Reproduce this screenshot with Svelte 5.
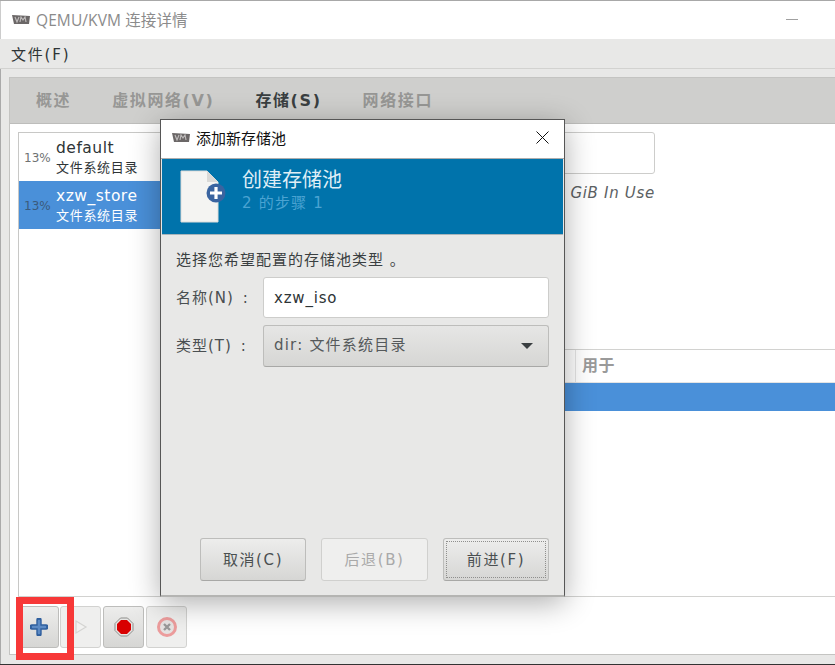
<script lang="ts">
	const tabs = [
		{ label: '概述', active: false },
		{ label: '虚拟网络(V)', active: false },
		{ label: '存储(S)', active: true },
		{ label: '网络接口', active: false },
	];
	const pools = [
		{ pct: '13%', name: 'default', kind: '文件系统目录', selected: false },
		{ pct: '13%', name: 'xzw_store', kind: '文件系统目录', selected: true },
	];
</script>

{#snippet vmIcon()}
	<svg class="vm" width="20" height="11" viewBox="0 0 20 11">
		<path d="M1 1 L19 2 L18 10 L3 10 Z" fill="#6b6767" />
		<path d="M4 3 L6 8 L8 3 M9 8 L10 3 L12 6 L14 3 L15 8" fill="none" stroke="#bdbaba" stroke-width="1.2" />
	</svg>
{/snippet}

<div class="window">
	<header class="titlebar">
		{@render vmIcon()}
		<span class="title">QEMU/KVM 连接详情</span>
		<span class="minimize"></span>
	</header>
	<nav class="menubar"><span>文件(F)</span></nav>

	<div class="page">
		<section class="notebook">
			<div class="tabs">
				{#each tabs as tab}
					<span class="tab" class:active={tab.active}>{tab.label}</span>
				{/each}
			</div>
			<div class="content">
				<div class="panes">
					<ul class="pools">
						{#each pools as pool}
							<li class:selected={pool.selected}>
								<span class="pct">{pool.pct}</span>
								<div class="pool-text">
									<span class="pool-name">{pool.name}</span>
									<span class="pool-kind">{pool.kind}</span>
								</div>
							</li>
						{/each}
					</ul>
					<div class="detail">
						<div class="top">
							<div class="namebox"></div>
							<span class="usage">GiB In Use</span>
						</div>
						<div class="volumes">
							<div class="vol-head"><span>用于</span></div>
							<div class="vol-row"></div>
						</div>
					</div>
				</div>
				<div class="toolbar">
					<button class="tool">
						<svg width="18" height="18" viewBox="0 0 18 18">
							<path d="M9 2 V16 M2 9 H16" stroke="#2f5f9e" stroke-width="5.4" stroke-linecap="round" />
							<path d="M9 3 V15 M3 9 H15" stroke="#5c8ac4" stroke-width="2.6" stroke-linecap="round" />
						</svg>
					</button>
					<button class="tool off">
						<svg width="14" height="16" viewBox="0 0 14 16">
							<path d="M2 2 L12 8 L2 14 Z" fill="#f2f2f1" stroke="#d4d4d2" stroke-width="1.2" />
						</svg>
					</button>
					<button class="tool">
						<svg width="20" height="20" viewBox="0 0 20 20">
							<path d="M6.5 1 H13.5 L19 6.5 V13.5 L13.5 19 H6.5 L1 13.5 V6.5 Z" fill="#e6e6e4" stroke="#8d8d8b" />
							<path d="M7 3 H13 L17 7 V13 L13 17 H7 L3 13 V7 Z" fill="#d80000" />
						</svg>
					</button>
					<button class="tool off">
						<svg width="22" height="22" viewBox="0 0 22 22">
							<circle cx="11" cy="11" r="8.5" fill="#e6e3e2" stroke="#ec9c9c" stroke-width="3" />
							<path d="M8 8 L14 14 M14 8 L8 14" stroke="#999" stroke-width="2.4" />
						</svg>
					</button>
				</div>
			</div>
		</section>
	</div>

	<div class="dialog">
		<div class="dlg-title">
			{@render vmIcon()}
			<span class="dlg-name">添加新存储池</span>
			<svg class="close" width="13" height="13" viewBox="0 0 13 13">
				<path d="M0.5 0.5 L12.5 12.5 M12.5 0.5 L0.5 12.5" stroke="#111" stroke-width="1" />
			</svg>
		</div>
		<div class="banner">
			<div class="doc">
				<svg width="48" height="54" viewBox="0 0 48 54">
					<path d="M2 1 H28 L39 12 V52 H2 Z" fill="#f4f4f2" stroke="#dcdcda" />
					<path d="M28 1 V12 H39 Z" fill="#d9d9d7" />
					<circle cx="37" cy="23" r="9.5" fill="#3a64a0" />
					<path d="M37 17 V29 M31 23 H43" stroke="#fff" stroke-width="3.2" />
				</svg>
			</div>
			<div class="banner-text">
				<span class="banner-title">创建存储池</span>
				<span class="banner-step">2 的步骤 1</span>
			</div>
		</div>
		<div class="dlg-body">
			<p class="hint">选择您希望配置的存储池类型 。</p>
			<div class="form">
				<span class="field-label">名称(N) :</span>
				<div class="entry">xzw_iso</div>
				<span class="field-label">类型(T) :</span>
				<div class="combo">
					<span>dir: 文件系统目录</span>
					<span class="arrow"></span>
				</div>
			</div>
			<div class="actions">
				<button class="btn">取消(C)</button>
				<button class="btn disabled">后退(B)</button>
				<button class="btn focused"><span>前进(F)</span></button>
			</div>
		</div>
	</div>

	<div class="highlight"></div>
</div>

<style>
	:global(body) {
		margin: 0;
		background: #e8e8e7;
	}

	.window {
		position: relative;
		width: 835px;
		height: 665px;
		overflow: hidden;
		display: flex;
		flex-direction: column;
		box-sizing: border-box;
		border-top: 1px solid #a8a8a8;
		border-bottom: 1px solid #333;
		background: #e8e8e7;
		font-family: "DejaVu Sans", "Noto Sans CJK SC", sans-serif;
		color: #2e3436;
	}

	.titlebar {
		height: 38px;
		flex: none;
		display: flex;
		align-items: center;
		background: #fff;
		padding: 0 0 2px 10px;
		box-sizing: border-box;
		border-left: 1px solid #ccc;
	}

	.vm {
		flex: none;
	}

	.title {
		margin-left: 5px;
		font-size: 15.5px;
		letter-spacing: 0.1px;
		color: #8b8b8b;
		font-family: "Open Sans", "Noto Sans CJK SC", sans-serif;
	}

	.minimize {
		margin-left: auto;
		margin-right: 37px;
		width: 12px;
		height: 1px;
		background: #a0a0a0;
	}

	.menubar {
		height: 30px;
		flex: none;
		display: flex;
		align-items: center;
		padding: 0 0 1px 11px;
		font-size: 15px;
		letter-spacing: 1.8px;
		border-bottom: 1px solid #d2d2d0;
		box-sizing: border-box;
	}

	.page {
		flex: 1;
		padding: 8px 0 9px 8px;
		min-height: 0;
		display: flex;
		border-left: 1px solid #aaa;
	}

	.notebook {
		flex: 1;
		display: flex;
		flex-direction: column;
		border: 1px solid #c4c4c2;
		border-right: none;
		min-width: 0;
	}

	.tabs {
		height: 46px;
		flex: none;
		display: flex;
		align-items: center;
		gap: 41px;
		padding: 0 0 4px 26px;
		background: #cfcfcd;
		border-bottom: 1px solid #bdbdbb;
		box-sizing: border-box;
		font-size: 16px;
		font-weight: 700;
		letter-spacing: 1.6px;
		color: #979795;
	}

	.tab.active {
		color: #3a3f41;
	}

	.content {
		flex: 1;
		min-height: 0;
		display: flex;
		flex-direction: column;
		background: #fff;
		padding: 8px 0 0 8px;
	}

	.panes {
		flex: 1;
		min-height: 0;
		display: flex;
		border-bottom: 1px solid #d2d2d0;
	}

	.pools {
		list-style: none;
		margin: 0;
		padding: 0;
		width: 160px;
		flex: none;
		border: 1px solid #c8c8c6;
		border-bottom: none;
	}

	.pools li {
		height: 48px;
		display: flex;
		align-items: center;
		padding: 1px 0 0 5px;
		box-sizing: border-box;
	}

	.pools li.selected {
		background: #4a90d9;
		color: #fff;
	}

	.pct {
		width: 32px;
		flex: none;
		font-size: 12px;
		color: #6f7273;
	}

	.selected .pct {
		color: #3b5a7c;
	}

	.pool-text {
		display: flex;
		flex-direction: column;
		line-height: 20px;
	}

	.pool-name {
		font-size: 15.5px;
		letter-spacing: 0.5px;
	}

	.pool-kind {
		font-size: 13px;
		letter-spacing: 0.7px;
		line-height: 20px;
	}

	.detail {
		flex: 1;
		min-width: 0;
		display: flex;
		flex-direction: column;
		justify-content: space-between;
	}

	.top {
		width: 475px;
		display: flex;
		flex-direction: column;
		align-items: flex-end;
	}

	.namebox {
		width: 100%;
		height: 42px;
		box-sizing: border-box;
		border: 1px solid #cdcdcb;
		border-radius: 3px;
	}

	.usage {
		margin-top: 10px;
		font-size: 15px;
		font-style: italic;
		letter-spacing: 0.7px;
		color: #5c6163;
	}

	.volumes {
		height: 246px;
		flex: none;
		border-top: 1px solid #d2d2d0;
	}

	.vol-head {
		height: 33px;
		padding-left: 395px;
		display: flex;
		font-size: 16px;
		font-weight: 700;
		letter-spacing: 0.5px;
		color: #9a9a9a;
		border-bottom: 1px solid #e4e4e4;
		box-sizing: border-box;
	}

	.vol-head span {
		display: flex;
		align-items: center;
		padding: 0 0 5px 6px;
		border-left: 1px solid #e4e4e4;
	}

	.vol-row {
		height: 28px;
		background: #4a90d9;
	}

	.toolbar {
		height: 57px;
		flex: none;
		display: flex;
		align-items: center;
		gap: 2px;
		padding-top: 2px;
		box-sizing: border-box;
	}

	.tool {
		width: 41px;
		height: 42px;
		padding: 0;
		display: flex;
		align-items: center;
		justify-content: center;
		border: 1px solid #bdbdbb;
		border-radius: 3px;
		background: linear-gradient(#ededec, #d6d6d4);
	}

	.tool:first-child {
		margin-right: -1px;
	}

	.tool.off {
		background: #efefee;
		border-color: #d2d2d0;
	}

	.dialog {
		position: absolute;
		left: 160px;
		top: 118px;
		width: 405px;
		height: 478px;
		box-sizing: border-box;
		display: flex;
		flex-direction: column;
		background: #e8e8e7;
		border: 1px solid #565656;
		border-bottom: 2px solid #b4b4b2;
		box-shadow: 0 6px 28px rgba(0, 0, 0, 0.32);
	}

	.dlg-title {
		height: 35px;
		flex: none;
		display: flex;
		align-items: center;
		background: #fff;
		padding: 0 15px 3px 10px;
		border-bottom: 1px solid #adadad;
	}

	.dlg-name {
		margin-left: 5px;
		font-size: 15px;
		color: #111;
	}

	.close {
		margin-left: auto;
	}

	.banner {
		height: 76px;
		flex: none;
		display: flex;
		align-items: center;
		margin: 0 1px;
		background: #0073ab;
		border-bottom: 1px solid #a8b4ba;
		box-sizing: border-box;
	}

	.doc {
		width: 80px;
		padding-left: 17px;
		box-sizing: border-box;
		flex: none;
		display: flex;
	}

	.banner-text {
		display: flex;
		flex-direction: column;
		margin-top: -12px;
	}

	.banner-title {
		font-size: 20px;
		line-height: 25px;
		color: #dfeef6;
	}

	.banner-step {
		font-size: 15px;
		line-height: 20px;
		letter-spacing: 1.2px;
		color: #4ba3d2;
	}

	.dlg-body {
		flex: 1;
		min-height: 0;
		display: flex;
		flex-direction: column;
		padding: 16px 15px 14px;
	}

	.hint {
		margin: 0;
		font-size: 15px;
		letter-spacing: 1px;
		line-height: 18px;
		color: #3a3f41;
	}

	.form {
		margin-top: 8px;
		display: grid;
		grid-template-columns: 87px 286px;
		row-gap: 7px;
		align-items: center;
	}

	.field-label {
		font-size: 15px;
		letter-spacing: 1px;
		word-spacing: 3px;
		padding-bottom: 3px;
		color: #4a4f51;
	}

	.entry {
		height: 41px;
		box-sizing: border-box;
		display: flex;
		align-items: center;
		padding-left: 10px;
		background: #fff;
		border: 1px solid #cdcdcb;
		border-radius: 3px;
		font-size: 15px;
		letter-spacing: 0.8px;
		color: #2e3436;
	}

	.combo {
		height: 42px;
		box-sizing: border-box;
		display: flex;
		align-items: center;
		justify-content: space-between;
		padding: 0 15px 6px 10px;
		background: linear-gradient(#e6e6e5, #d6d6d4);
		border: 1px solid #bdbdbb;
		border-bottom-color: #a8a8a6;
		border-radius: 3px;
		font-size: 15px;
		letter-spacing: 1.2px;
		color: #55595b;
	}

	.arrow {
		width: 0;
		height: 0;
		margin-top: 5px;
		border-left: 6px solid transparent;
		border-right: 6px solid transparent;
		border-top: 6px solid #3a3f41;
	}

	.actions {
		margin-top: auto;
		display: flex;
		justify-content: flex-end;
		gap: 15px;
	}

	.btn {
		width: 106px;
		height: 43px;
		padding: 0 0 3px;
		box-sizing: border-box;
		border: 1px solid #bdbdbb;
		border-bottom-color: #a8a8a6;
		border-radius: 3px;
		background: linear-gradient(#ededec, #d6d6d4);
		font-family: inherit;
		font-size: 15px;
		letter-spacing: 1.6px;
		color: #4a4f51;
	}

	.btn.disabled {
		width: 107px;
		background: #efefee;
		border-color: #d0d0ce;
		color: #a9a9a9;
	}

	.btn.focused {
		padding: 2px;
	}

	.btn.focused span {
		display: flex;
		height: 100%;
		align-items: center;
		justify-content: center;
		padding-bottom: 3px;
		border: 1px dotted #8f8f8d;
		box-sizing: border-box;
	}

	.highlight {
		position: absolute;
		left: 16px;
		top: 596px;
		width: 58px;
		height: 63px;
		box-sizing: border-box;
		border: 7px solid #f73838;
	}
</style>
